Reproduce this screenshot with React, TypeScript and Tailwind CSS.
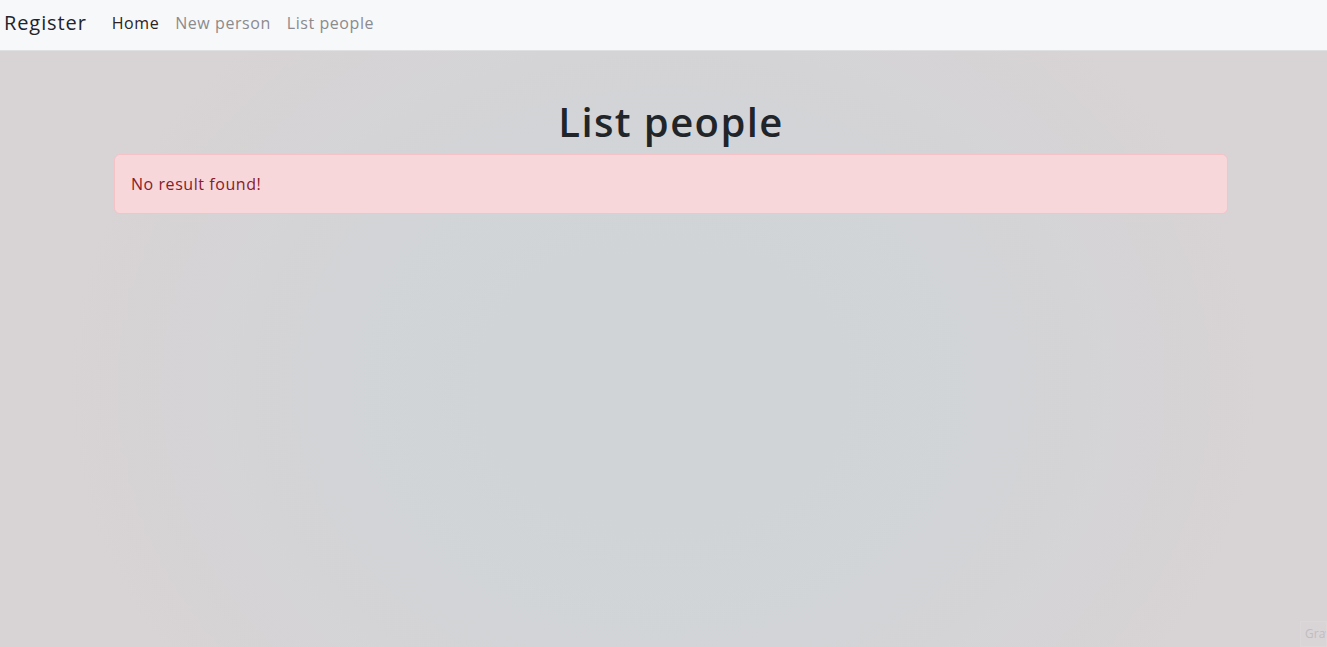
import { useState } from 'react'

const links = ['Home', 'New person', 'List people']

export default function App() {
  const [active] = useState('Home')

  return (
    <div
      className="relative min-h-[647px] w-full overflow-hidden bg-[radial-gradient(ellipse_45%_75%_at_50%_60%,#d0d4d7_0%,#d2d4d7_55%,#d8d3d5_100%)] text-[#212529]"
      style={{ fontFamily: '"Open Sans", "DejaVu Sans", sans-serif' }}
    >
      <nav className="flex h-[51px] items-center border-b border-[#dfe0e2] bg-[#f7f8fa] pb-[5px] pl-1">
        <span className="mr-[25px] text-[20px] tracking-[0.045em] text-[#212529]">Register</span>
        <ul className="flex gap-[16px] text-[16px] tracking-[0.035em]">
          {links.map((l) => (
            <li key={l} className={l === active ? 'text-[#2b2221]' : 'text-[#8b8a8e]'}>
              {l}
            </li>
          ))}
        </ul>
      </nav>

      <main className="ml-[114px] w-[1114px] pt-[47px]">
        <h1 className="text-center text-[40px] font-semibold leading-[48px] tracking-[0.035em]">List people</h1>
        <div className="mt-[8px] rounded-md border border-[#f5c2c7] bg-[#f8d7da] px-4 py-[17px] text-[16px] leading-6 tracking-[0.035em] text-[#842029]">
          No result found!
        </div>
      </main>

      <div className="absolute bottom-0 right-0 w-[27px] overflow-hidden whitespace-nowrap border border-[#dcd7d9] bg-[#d9d5d7] py-1 pl-1 text-[12px] leading-4 text-[#c2bcbf]">
        Gravatar
      </div>
    </div>
  )
}
